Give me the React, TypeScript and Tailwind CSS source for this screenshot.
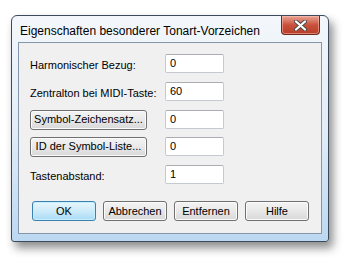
import React from 'react'

const fields = [
  { label: 'Harmonischer Bezug:', value: '0', button: false },
  { label: 'Zentralton bei MIDI-Taste:', value: '60', button: false },
  { label: 'Symbol-Zeichensatz...', value: '0', button: true },
  { label: 'ID der Symbol-Liste...', value: '0', button: true },
  { label: 'Tastenabstand:', value: '1', button: false },
]

const btn =
  'h-[20px] rounded-[3px] border border-[#707070] bg-gradient-to-b from-[#f4f4f4] via-[#e8e8e8] to-[#d8d8d8] text-[11px] text-black shadow-[inset_0_0_0_1px_#fbfbfb] flex items-center justify-center'

function CloseButton() {
  return (
    <div className="w-[39px] h-[19px] rounded-b-[4px] border border-t-0 border-[#6b2a1f] bg-gradient-to-b from-[#e8a595] via-[#c9503b] to-[#b83d2a] shadow-[inset_0_0_0_1px_rgba(255,200,190,0.5)] flex items-center justify-center">
      <svg width="13" height="11" viewBox="0 0 13 11">
        <path
          d="M2 1.5 L6.5 5.5 L11 1.5 M2 9.5 L6.5 5.5 L11 9.5"
          stroke="#4a4a4a"
          strokeWidth="4"
          fill="none"
          strokeLinecap="round"
        />
        <path
          d="M2 1.5 L6.5 5.5 L11 1.5 M2 9.5 L6.5 5.5 L11 9.5"
          stroke="#ffffff"
          strokeWidth="2.2"
          fill="none"
          strokeLinecap="round"
        />
      </svg>
    </div>
  )
}

export default function App() {
  return (
    <div className="w-[354px] h-[264px] bg-white pl-[11px] pt-[15px] overflow-hidden font-['Liberation_Sans',Arial,sans-serif]">
      <div className="w-[318px] h-[227px] rounded-t-[6px] rounded-b-[3px] border border-[#3b4a5c] bg-gradient-to-b from-[#f3f7fb] via-[#e3edf7] to-[#bcd8f1] shadow-[4px_6px_10px_rgba(0,0,0,0.45)] flex flex-col px-[6px] pb-[7px]">
        <div className="h-[26px] flex items-start justify-between">
          <div className="pl-[2px] pt-[6px] text-[12px] text-black">
            Eigenschaften besonderer Tonart-Vorzeichen
          </div>
          <div className="mr-[2px]">
            <CloseButton />
          </div>
        </div>
        <div className="flex-1 bg-[#f0f0f0] border border-[#8496ab] flex flex-col pt-[11px] pl-[11px]">
          {fields.map((f, i) => (
            <div
              key={i}
              className={`flex items-center h-[19px] ${i === 0 ? '' : i === 3 ? 'mt-[8px]' : 'mt-[9px]'}`}
            >
              <div className="w-[135px]">
                {f.button ? (
                  <div className={`${btn} w-[117px]`}>{f.label}</div>
                ) : (
                  <span className="text-[11px] text-black">{f.label}</span>
                )}
              </div>
              <div className="w-[59px] h-[19px] bg-white border border-[#c5cad1] border-t-[#abadb3] rounded-[2px] text-[11px] text-black flex items-center pl-[4px]">
                {f.value}
              </div>
            </div>
          ))}
          <div className="flex gap-[7px] mt-[17px] ml-[2px]">
            <div className="w-[64px] h-[20px] rounded-[3px] border border-[#3c7fb1] bg-gradient-to-b from-[#e8f6fd] via-[#cdebf9] to-[#a9dbf6] shadow-[inset_0_0_0_1px_#c6f0ff] text-[11px] text-black flex items-center justify-center">
              OK
            </div>
            <div className={`${btn} w-[64px]`}>Abbrechen</div>
            <div className={`${btn} w-[64px]`}>Entfernen</div>
            <div className={`${btn} w-[64px]`}>Hilfe</div>
          </div>
        </div>
      </div>
    </div>
  )
}
